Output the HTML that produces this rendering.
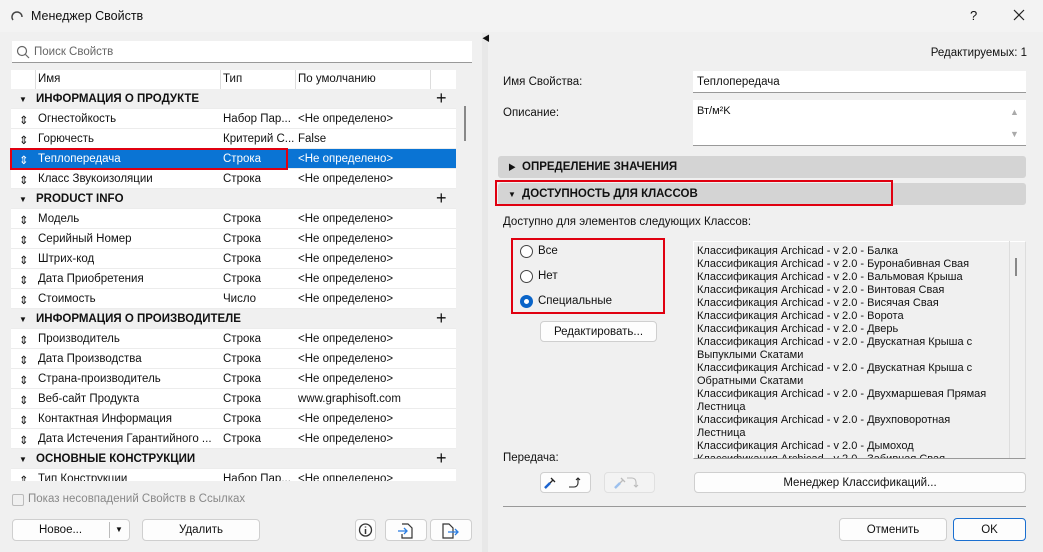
<!DOCTYPE html>
<html><head><meta charset="utf-8"><style>
*{box-sizing:border-box;margin:0;padding:0}
body{width:1043px;height:552px;overflow:hidden;background:#f0f0f0;font-family:"Liberation Sans","Noto Sans CJK SC",sans-serif;font-size:11.5px;color:#111;position:relative}
.a{position:absolute;white-space:nowrap}
.row{position:absolute;left:11px;width:445px;height:20px;background:#fff;border-bottom:1px solid #ececec}
.row span{position:absolute;top:4px;white-space:nowrap;overflow:hidden}
.sec{background:#f0f0f0;font-weight:bold}
.btn{position:absolute;background:#fdfdfd;border:1px solid #cfcfcf;border-radius:4px;text-align:center;font-size:11.5px}
.bar{position:absolute;left:498px;width:528px;height:22px;background:#d4d4d4;border-radius:3px;font-weight:bold;font-size:11.5px}
.radio{position:absolute;width:13px;height:13px;border:1px solid #444;border-radius:50%;background:#fff}
.li{height:13px;line-height:13px;font-size:11px}
</style></head><body>
<div class="a" style="left:0;top:0;width:1043px;height:32px;background:#f3f3f3"></div>
<svg class="a" style="left:10px;top:9px" width="14" height="14"><path d="M3 11 A5 5 0 1 1 12 8" fill="none" stroke="#444" stroke-width="1.5"/></svg>
<div class="a" style="left:31px;top:9px;font-size:12.5px">Менеджер Свойств</div>
<div class="a" style="left:970px;top:8px;font-size:13px">?</div>
<svg class="a" style="left:1013px;top:9px" width="12" height="12"><path d="M1 1L11 11M11 1L1 11" stroke="#222" stroke-width="1.2"/></svg>

<div class="a" style="left:12px;top:41px;width:460px;height:22px;background:#fff;border-bottom:1px solid #999"></div>
<svg class="a" style="left:16px;top:45px" width="14" height="14"><circle cx="6" cy="6" r="4.5" fill="none" stroke="#666" stroke-width="1.2"/><path d="M9.5 9.5L13 13" stroke="#666" stroke-width="1.2"/></svg>
<div class="a" style="left:34px;top:46px;color:#666">Поиск Свойств</div>

<div class="a" style="left:11px;top:70px;width:445px;height:19px;background:#fff"></div>
<div class="a" style="left:35px;top:70px;width:1px;height:19px;background:#ddd"></div>
<div class="a" style="left:220px;top:70px;width:1px;height:19px;background:#ddd"></div>
<div class="a" style="left:295px;top:70px;width:1px;height:19px;background:#ddd"></div>
<div class="a" style="left:430px;top:70px;width:1px;height:19px;background:#ddd"></div>
<div class="a" style="left:38px;top:73px">Имя</div>
<div class="a" style="left:223px;top:73px">Тип</div>
<div class="a" style="left:298px;top:73px">По умолчанию</div>
<div class="a" style="left:456px;top:89px;width:16px;height:392px;background:#f0f0f0"></div>
<div class="a" style="left:464px;top:106px;width:2px;height:35px;background:#888"></div>
<div class="a" style="left:11px;top:89px;width:445px;height:392px;overflow:hidden">
<div style="position:relative;left:-11px;top:-89px">
<div class="row sec" style="top:89px"><span style="left:8px;font-size:8px;top:6px">▼</span><span style="left:25px">ИНФОРМАЦИЯ О ПРОДУКТЕ</span><span style="left:425px;font-weight:normal;font-size:18px;top:-1px">+</span></div>
<div class="row" style="top:109px"><span style="left:8px">⇕</span><span style="left:27px">Огнестойкость</span><span style="left:212px">Набор Пар...</span><span style="left:287px">&lt;Не определено&gt;</span></div>
<div class="row" style="top:129px"><span style="left:8px">⇕</span><span style="left:27px">Горючесть</span><span style="left:212px">Критерий С...</span><span style="left:287px">False</span></div>
<div class="row" style="top:149px;background:#0a74d4;color:#fff"><span style="left:8px">⇕</span><span style="left:27px">Теплопередача</span><span style="left:212px">Строка</span><span style="left:287px">&lt;Не определено&gt;</span></div>
<div class="row" style="top:169px"><span style="left:8px">⇕</span><span style="left:27px">Класс Звукоизоляции</span><span style="left:212px">Строка</span><span style="left:287px">&lt;Не определено&gt;</span></div>
<div class="row sec" style="top:189px"><span style="left:8px;font-size:8px;top:6px">▼</span><span style="left:25px">PRODUCT INFO</span><span style="left:425px;font-weight:normal;font-size:18px;top:-1px">+</span></div>
<div class="row" style="top:209px"><span style="left:8px">⇕</span><span style="left:27px">Модель</span><span style="left:212px">Строка</span><span style="left:287px">&lt;Не определено&gt;</span></div>
<div class="row" style="top:229px"><span style="left:8px">⇕</span><span style="left:27px">Серийный Номер</span><span style="left:212px">Строка</span><span style="left:287px">&lt;Не определено&gt;</span></div>
<div class="row" style="top:249px"><span style="left:8px">⇕</span><span style="left:27px">Штрих-код</span><span style="left:212px">Строка</span><span style="left:287px">&lt;Не определено&gt;</span></div>
<div class="row" style="top:269px"><span style="left:8px">⇕</span><span style="left:27px">Дата Приобретения</span><span style="left:212px">Строка</span><span style="left:287px">&lt;Не определено&gt;</span></div>
<div class="row" style="top:289px"><span style="left:8px">⇕</span><span style="left:27px">Стоимость</span><span style="left:212px">Число</span><span style="left:287px">&lt;Не определено&gt;</span></div>
<div class="row sec" style="top:309px"><span style="left:8px;font-size:8px;top:6px">▼</span><span style="left:25px">ИНФОРМАЦИЯ О ПРОИЗВОДИТЕЛЕ</span><span style="left:425px;font-weight:normal;font-size:18px;top:-1px">+</span></div>
<div class="row" style="top:329px"><span style="left:8px">⇕</span><span style="left:27px">Производитель</span><span style="left:212px">Строка</span><span style="left:287px">&lt;Не определено&gt;</span></div>
<div class="row" style="top:349px"><span style="left:8px">⇕</span><span style="left:27px">Дата Производства</span><span style="left:212px">Строка</span><span style="left:287px">&lt;Не определено&gt;</span></div>
<div class="row" style="top:369px"><span style="left:8px">⇕</span><span style="left:27px">Страна-производитель</span><span style="left:212px">Строка</span><span style="left:287px">&lt;Не определено&gt;</span></div>
<div class="row" style="top:389px"><span style="left:8px">⇕</span><span style="left:27px">Веб-сайт Продукта</span><span style="left:212px">Строка</span><span style="left:287px">www.graphisoft.com</span></div>
<div class="row" style="top:409px"><span style="left:8px">⇕</span><span style="left:27px">Контактная Информация</span><span style="left:212px">Строка</span><span style="left:287px">&lt;Не определено&gt;</span></div>
<div class="row" style="top:429px"><span style="left:8px">⇕</span><span style="left:27px;width:180px">Дата Истечения Гарантийного ...</span><span style="left:212px">Строка</span><span style="left:287px">&lt;Не определено&gt;</span></div>
<div class="row sec" style="top:449px"><span style="left:8px;font-size:8px;top:6px">▼</span><span style="left:25px">ОСНОВНЫЕ КОНСТРУКЦИИ</span><span style="left:425px;font-weight:normal;font-size:18px;top:-1px">+</span></div>
<div class="row" style="top:469px"><span style="left:8px">⇕</span><span style="left:27px">Тип Конструкции</span><span style="left:212px">Набор Пар...</span><span style="left:287px">&lt;Не определено&gt;</span></div>
</div></div>
<div class="a" style="left:10px;top:148px;width:278px;height:22px;border:2px solid #e00010"></div>

<div class="a" style="left:12px;top:494px;width:12px;height:12px;border:1px solid #bbb;border-radius:2px"></div>
<div class="a" style="left:28px;top:493px;color:#888">Показ несовпадений Свойств в Ссылках</div>
<div class="btn" style="left:12px;top:519px;width:118px;height:22px"><span class="a" style="left:26px;top:4px">Новое...</span><span class="a" style="left:96px;top:2px;width:1px;height:16px;background:#bbb"></span><span class="a" style="left:102px;top:5px;font-size:8px">▼</span></div>
<div class="btn" style="left:142px;top:519px;width:118px;height:22px;padding-top:4px">Удалить</div>
<div class="btn" style="left:355px;top:519px;width:21px;height:22px"><svg width="19" height="20"><circle cx="9.5" cy="10" r="6" fill="none" stroke="#333" stroke-width="1.3"/><path d="M9.5 9v5M9.5 6.5v1" stroke="#333" stroke-width="1.5"/></svg></div>
<div class="btn" style="left:385px;top:519px;width:42px;height:22px"><svg width="40" height="20"><path d="M16 4h6l4 4v10h-10v-4" fill="none" stroke="#333" stroke-width="1.2"/><path d="M12 11h9M18 8l3 3-3 3" fill="none" stroke="#2a7de1" stroke-width="1.3"/></svg></div>
<div class="btn" style="left:430px;top:519px;width:42px;height:22px"><svg width="40" height="20"><path d="M12 4h6l4 4v10h-10z" fill="none" stroke="#333" stroke-width="1.2"/><path d="M17 12h10M24 9l3 3-3 3" fill="none" stroke="#2a7de1" stroke-width="1.3"/></svg></div>

<div class="a" style="left:482px;top:33px;width:6px;height:519px;background:#e8e8e8"></div>
<div class="a" style="left:482px;top:33px;font-size:8px">◀</div>

<div class="a" style="right:16px;top:47px">Редактируемых: 1</div>
<div class="a" style="left:503px;top:76px">Имя Свойства:</div>
<div class="a" style="left:693px;top:71px;width:333px;height:22px;background:#fff;border-bottom:1px solid #999;padding:5px 4px">Теплопередача</div>
<div class="a" style="left:503px;top:107px">Описание:</div>
<div class="a" style="left:693px;top:100px;width:333px;height:46px;background:#fff;border-bottom:1px solid #999;padding:5px 4px;font-size:11px">Вт/м²K</div>
<div class="a" style="left:1010px;top:107px;font-size:9px;color:#aaa">▲</div>
<div class="a" style="left:1010px;top:129px;font-size:9px;color:#aaa">▼</div>
<div class="bar" style="top:156px"><span class="a" style="left:10px;top:6px;font-size:8px;font-weight:normal">▶</span><span class="a" style="left:24px;top:5px">ОПРЕДЕЛЕНИЕ ЗНАЧЕНИЯ</span></div>
<div class="bar" style="top:183px"><span class="a" style="left:10px;top:7px;font-size:8px;font-weight:normal">▼</span><span class="a" style="left:24px;top:5px">ДОСТУПНОСТЬ ДЛЯ КЛАССОВ</span></div>
<div class="a" style="left:495px;top:180px;width:398px;height:26px;border:2px solid #e00010"></div>
<div class="a" style="left:503px;top:216px">Доступно для элементов следующих Классов:</div>
<div class="radio" style="left:520px;top:245px"></div><div class="a" style="left:538px;top:245px">Все</div>
<div class="radio" style="left:520px;top:270px"></div><div class="a" style="left:538px;top:270px">Нет</div>
<div class="radio" style="left:520px;top:295px;border:4px solid #0a64c8"></div><div class="a" style="left:538px;top:295px">Специальные</div>
<div class="a" style="left:511px;top:238px;width:154px;height:76px;border:2px solid #e00010"></div>
<div class="btn" style="left:540px;top:321px;width:117px;height:21px;padding-top:4px">Редактировать...</div>
<div class="a" style="left:693px;top:241px;width:333px;height:218px;border:1px solid #fff;border-right-color:#ddd;border-bottom-color:#999;overflow:hidden;padding:3px 0 0 3px">
<div class="li">Классификация Archicad - v 2.0 - Балка</div>
<div class="li">Классификация Archicad - v 2.0 - Буронабивная Свая</div>
<div class="li">Классификация Archicad - v 2.0 - Вальмовая Крыша</div>
<div class="li">Классификация Archicad - v 2.0 - Винтовая Свая</div>
<div class="li">Классификация Archicad - v 2.0 - Висячая Свая</div>
<div class="li">Классификация Archicad - v 2.0 - Ворота</div>
<div class="li">Классификация Archicad - v 2.0 - Дверь</div>
<div class="li">Классификация Archicad - v 2.0 - Двускатная Крыша с</div>
<div class="li">Выпуклыми Скатами</div>
<div class="li">Классификация Archicad - v 2.0 - Двускатная Крыша с</div>
<div class="li">Обратными Скатами</div>
<div class="li">Классификация Archicad - v 2.0 - Двухмаршевая Прямая</div>
<div class="li">Лестница</div>
<div class="li">Классификация Archicad - v 2.0 - Двухповоротная</div>
<div class="li">Лестница</div>
<div class="li">Классификация Archicad - v 2.0 - Дымоход</div>
<div class="li">Классификация Archicad - v 2.0 - Забивная Свая</div>
</div>
<div class="a" style="left:1009px;top:241px;width:1px;height:217px;background:#ddd"></div>
<div class="a" style="left:1015px;top:258px;width:2px;height:18px;background:#888"></div>
<div class="a" style="left:503px;top:452px">Передача:</div>
<div class="btn" style="left:540px;top:472px;width:51px;height:21px"><svg width="49" height="19"><path d="M4 15l8-8M10 5l4 4" stroke="#222" stroke-width="1.3"/><path d="M4 15l5-5" stroke="#1a63d0" stroke-width="2.5"/><path d="M28 14h5a4 4 0 0 0 4-4V5M35 7l2-2 2 2" fill="none" stroke="#222" stroke-width="1.1"/></svg></div>
<div class="btn" style="left:604px;top:472px;width:51px;height:21px;background:#f3f3f3;border-color:#e0e0e0"><svg width="49" height="19"><path d="M10 15l8-8M16 5l4 4" stroke="#bbb" stroke-width="1.3"/><path d="M10 15l5-5" stroke="#9cc0ee" stroke-width="2.5"/><path d="M22 5h5a4 4 0 0 1 4 4v5M29 12l2 2 2-2" fill="none" stroke="#bbb" stroke-width="1.1"/></svg></div>
<div class="btn" style="left:694px;top:472px;width:332px;height:21px;padding-top:4px">Менеджер Классификаций...</div>
<div class="a" style="left:503px;top:506px;width:523px;height:1px;background:#999"></div>
<div class="btn" style="left:839px;top:518px;width:108px;height:23px;padding-top:5px">Отменить</div>
<div class="btn" style="left:953px;top:518px;width:73px;height:23px;padding-top:5px;border-color:#1a6fd0">OK</div>
</body></html>
